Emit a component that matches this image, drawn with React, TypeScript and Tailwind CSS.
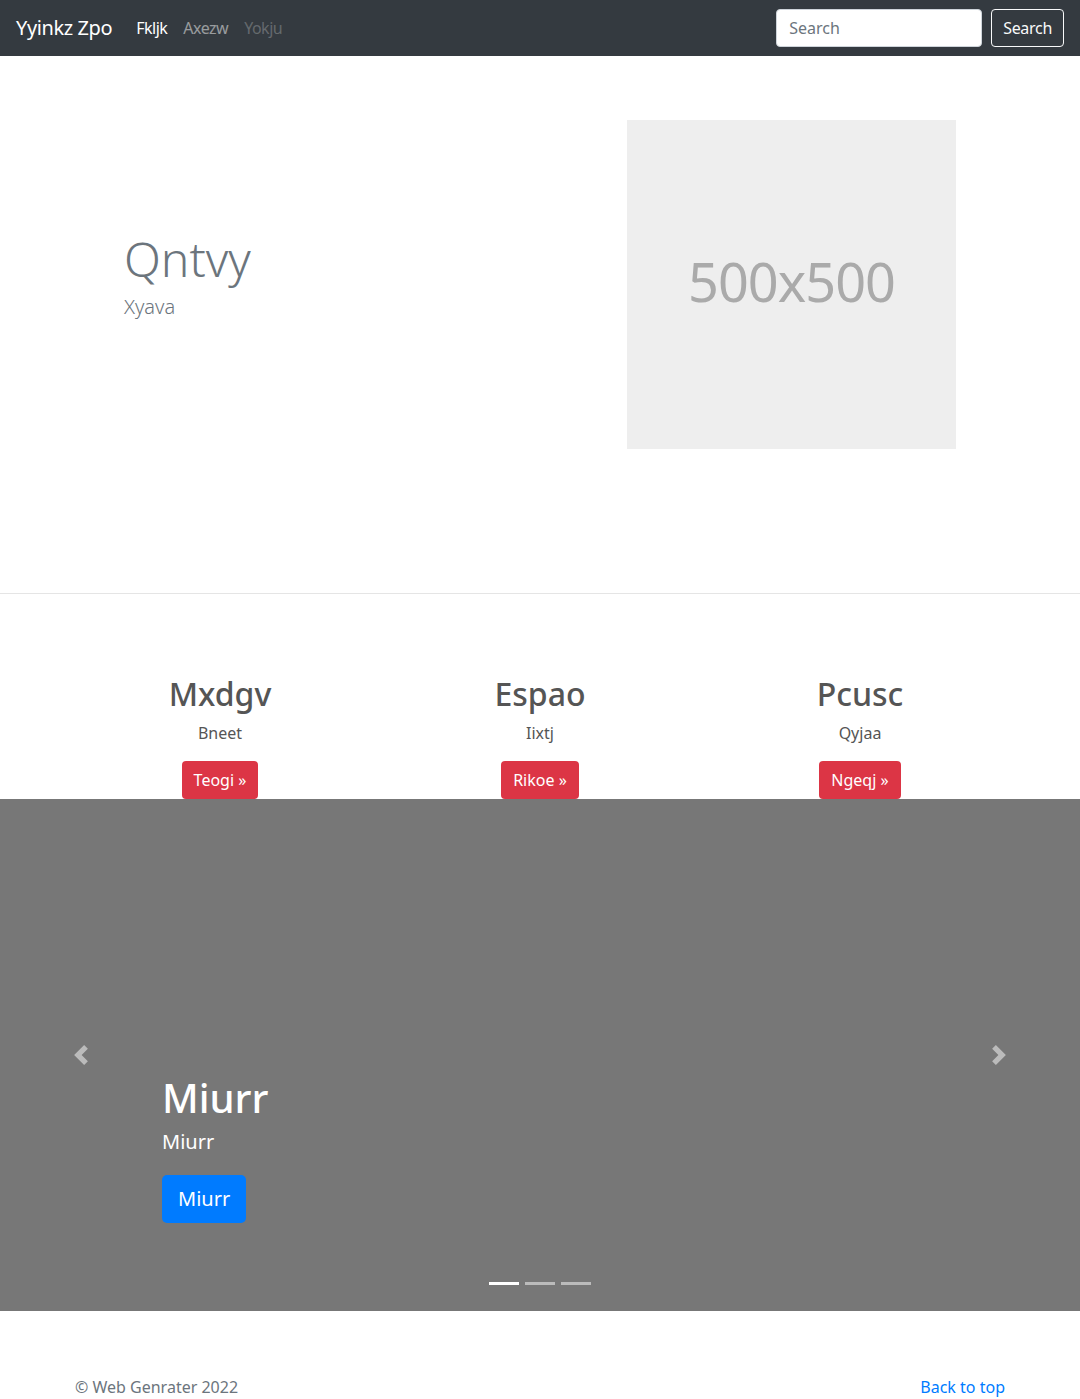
import React from "react";

const font = { fontFamily: '"Noto Sans", "Open Sans", sans-serif' };

function Chevron({ dir }: { dir: "left" | "right" }) {
  return (
    <svg width="20" height="20" viewBox="0 0 8 8" fill="#fff">
      {dir === "left" ? (
        <path d="M5.25 0l-4 4 4 4 1.5-1.5L4.25 4l2.5-2.5L5.25 0z" />
      ) : (
        <path d="M2.75 0l-1.5 1.5L3.75 4l-2.5 2.5L2.75 8l4-4-4-4z" />
      )}
    </svg>
  );
}

export default function App() {
  const features = [
    { t: "Mxdgv", s: "Bneet", b: "Teogi" },
    { t: "Espao", s: "Iixtj", b: "Rikoe" },
    { t: "Pcusc", s: "Qyjaa", b: "Ngeqj" },
  ];
  return (
    <div className="w-[1080px] bg-white text-[#212529]" style={font}>
      {/* Navbar */}
      <nav className="h-[56px] bg-[#343a40] flex items-center px-4">
        <span className="text-[20px] text-white mr-4 leading-[30px] tracking-[-0.4px]">Yyinkz Zpo</span>
        <div className="flex items-center text-[16px] tracking-[-0.5px]">
          <span className="px-2 text-white">Fkljk</span>
          <span className="px-2 text-white/50">Axezw</span>
          <span className="px-2 text-white/25">Yokju</span>
        </div>
        <div className="ml-auto flex items-center">
          <input
            placeholder="Search"
            className="w-[206px] h-[38px] rounded-[4px] bg-white border border-[#ced4da] px-3 text-[16px] placeholder-[#6c757d] mr-[9px] outline-none"
          />
          <button className="h-[38px] px-[11px] rounded-[4px] border border-[#f8f9fa] text-[#f8f9fa] text-[16px] tracking-[-0.3px]">
            Search
          </button>
        </div>
      </nav>

      {/* Hero */}
      <section className="border-b border-[#e5e5e5] pt-[64px] pb-[144px]">
        <div className="flex items-center">
          <div className="w-[540px] pl-[124px] pb-[17px]">
            <h1 className="text-[48px] font-light text-[#6c757d] leading-[1.2] mb-[5px]">Qntvy</h1>
            <p className="text-[20px] font-light text-[#6c757d] leading-[1.5]">Xyava</p>
          </div>
          <div className="w-[540px] pl-[87px]">
            <div className="w-[329px] h-[329px] bg-[#eeeeee] flex items-center justify-center pb-[7px]">
              <span className="text-[54px] tracking-[-1px] text-[#aaaaaa]">500x500</span>
            </div>
          </div>
        </div>
      </section>

      {/* Features */}
      <section className="pt-[81px]">
        <div className="w-[960px] mx-auto grid grid-cols-3">
          {features.map((f) => (
            <div key={f.t} className="flex flex-col items-center text-center">
              <h2 className="text-[32px] font-medium text-[#555] leading-[1.2] mb-2">{f.t}</h2>
              <p className="text-[16px] text-[#555] leading-[24px] mb-4">{f.s}</p>
              <button className="h-[38px] px-3 rounded-[4px] bg-[#dc3545] text-white text-[16px]">
                {f.b} »
              </button>
            </div>
          ))}
        </div>
      </section>

      {/* Carousel */}
      <section className="relative h-[512px] bg-[#777777]">
        <div className="absolute left-0 top-0 bottom-0 w-[15%] flex items-center justify-center opacity-50">
          <Chevron dir="left" />
        </div>
        <div className="absolute right-0 top-0 bottom-0 w-[15%] flex items-center justify-center opacity-50">
          <Chevron dir="right" />
        </div>
        <div className="absolute left-[15%] right-[15%] top-[275px] text-white">
          <h1 className="text-[40px] font-medium leading-[1.2] mb-[5px]">Miurr</h1>
          <p className="text-[20px] leading-[30px] mb-[18px]">Miurr</p>
          <button className="h-[48px] px-4 rounded-[5px] bg-[#007bff] text-white text-[20px]">Miurr</button>
        </div>
        <div className="absolute bottom-[26px] left-0 right-0 flex justify-center gap-[6px]">
          <span className="w-[30px] h-[3px] bg-white" />
          <span className="w-[30px] h-[3px] bg-white opacity-50" />
          <span className="w-[30px] h-[3px] bg-white opacity-50" />
        </div>
      </section>

      {/* Footer */}
      <footer className="pt-[64px] pb-[48px]">
        <div className="w-[930px] mx-auto flex justify-between text-[16px] leading-[24px]">
          <span className="text-[#6c757d]">© Web Genrater 2022</span>
          <span className="text-[#007bff]">Back to top</span>
        </div>
      </footer>
    </div>
  );
}
